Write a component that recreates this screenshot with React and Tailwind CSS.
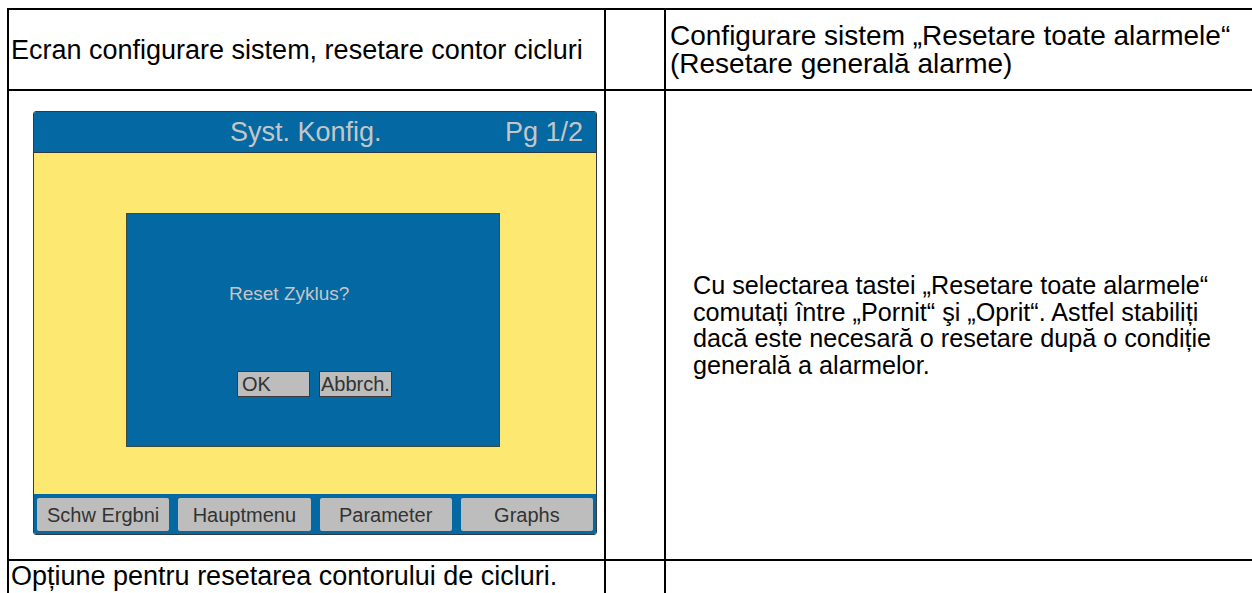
import React from "react";

const font = { fontFamily: '"Liberation Sans", Arial, sans-serif' };

function Device() {
  return (
    <div className="flex flex-col w-[564px] h-[424px] border border-[#2e3b44] rounded-[3px] overflow-hidden bg-[#fde871]">
      <div className="flex items-center h-[41px] bg-[#0468a2] border-b border-[#2e3b44] text-[#c6c6c6] text-[27px] pl-[196px] pr-[13px]">
        <span>Syst. Konfig.</span>
        <span className="ml-auto">Pg 1/2</span>
      </div>
      <div className="flex-1 pl-[92px] pt-[60px]">
        <div className="w-[374px] h-[234px] bg-[#0468a2] border border-[#3b4b3f] flex flex-col">
          <div className="pl-[102px] pt-[69px] text-[19px] leading-[22px] text-[#c6c6c6]">Reset Zyklus?</div>
          <div className="flex gap-[9px] pl-[110px] mt-[66px]">
            <div className="w-[73px] h-[26px] bg-[#bdbdbd] border border-[#3a3a3a] text-[20px] leading-[24px] pl-[4px] text-[#333]">OK</div>
            <div className="w-[73px] h-[26px] bg-[#bdbdbd] border border-[#3a3a3a] text-[20px] leading-[24px] pl-[1px] text-[#333] whitespace-nowrap overflow-hidden">Abbrch.</div>
          </div>
        </div>
      </div>
      <div className="h-[40px] bg-[#0468a2] grid grid-cols-4 gap-[9px] px-[3px] pt-[4px] pb-[3px]">
        {["Schw Ergbni", "Hauptmenu", "Parameter", "Graphs"].map((t) => (
          <div key={t} className="bg-[#bdbdbd] rounded-[2px] flex items-center justify-center text-[20px] text-[#333]">
            {t}
          </div>
        ))}
      </div>
    </div>
  );
}

export default function App() {
  return (
    <div className="w-[1252px] h-[593px] bg-white overflow-hidden" style={font}>
      <div className="ml-[7px] mt-[8px] w-[1300px] bg-black p-[2px] grid grid-cols-[595px_58px_600px] grid-rows-[79px_468px_60px] gap-[2px] text-black">
        <div className="bg-white flex items-center pl-[2px] text-[27px] leading-[28px] whitespace-nowrap">Ecran configurare sistem, resetare contor cicluri</div>
        <div className="bg-white"></div>
        <div className="bg-white flex items-center pl-[4px] text-[28px] leading-[27.5px] whitespace-nowrap">
          <div>
            Configurare sistem „Resetare toate alarmele“
            <br />
            (Resetare generală alarme)
          </div>
        </div>
        <div className="bg-white pl-[24px] pt-[20px]">
          <Device />
        </div>
        <div className="bg-white"></div>
        <div className="bg-white flex items-center pl-[27px] text-[25.2px] leading-[26.5px] whitespace-nowrap">
          <div>
            Cu selectarea tastei „Resetare toate alarmele“
            <br />
            comutați între „Pornit“ şi „Oprit“. Astfel stabiliți
            <br />
            dacă este necesară o resetare după o condiție
            <br />
            generală a alarmelor.
          </div>
        </div>
        <div className="bg-white pl-[2px] pt-[1px] text-[27px] leading-[28px] whitespace-nowrap">Opțiune pentru resetarea contorului de cicluri.</div>
        <div className="bg-white"></div>
        <div className="bg-white"></div>
      </div>
    </div>
  );
}
